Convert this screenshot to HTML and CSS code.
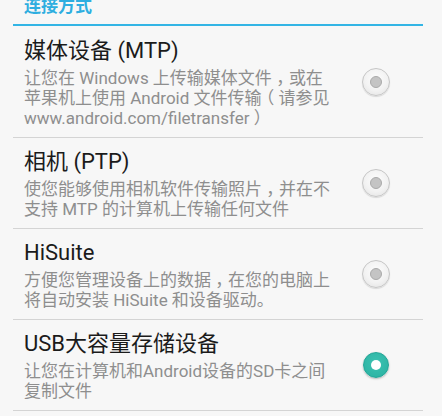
FILE: index.html
```html
<!DOCTYPE html>
<html lang="zh-CN">
<head>
<meta charset="utf-8">
<title>连接方式</title>
<link rel="stylesheet" href="styles.css">
</head>
<body>
<div class="screen">
  <div class="header">连接方式</div>
  <ul class="list">
    <li class="item">
      <div class="text">
        <div class="title">媒体设备 (MTP)</div>
        <div class="desc">
          <div class="line">让您在 Windows 上传输媒体文件<span class="p">，</span>或在</div>
          <div class="line">苹果机上使用 Android 文件传输<span class="p">（</span>请参见</div>
          <div class="line">www.android.com/filetransfer<span class="p">）</span></div>
        </div>
      </div>
      <span class="radio"></span>
    </li>
    <li class="item">
      <div class="text">
        <div class="title">相机 (PTP)</div>
        <div class="desc">
          <div class="line">使您能够使用相机软件传输照片<span class="p">，</span>并在不</div>
          <div class="line">支持 MTP 的计算机上传输任何文件</div>
        </div>
      </div>
      <span class="radio"></span>
    </li>
    <li class="item">
      <div class="text">
        <div class="title">HiSuite</div>
        <div class="desc">
          <div class="line">方便您管理设备上的数据<span class="p">，</span>在您的电脑上</div>
          <div class="line">将自动安装 HiSuite 和设备驱动。</div>
        </div>
      </div>
      <span class="radio"></span>
    </li>
    <li class="item">
      <div class="text">
        <div class="title">USB大容量存储设备</div>
        <div class="desc">
          <div class="line">让您在计算机和Android设备的SD卡之间</div>
          <div class="line">复制文件</div>
        </div>
      </div>
      <span class="radio checked"></span>
    </li>
  </ul>
</div>
</body>
</html>
```

FILE: styles.css
```css
html, body {
  margin: 0;
  padding: 0;
  background: #f7f7f7;
}
body {
  font-family: Roboto, "Noto Sans CJK SC", sans-serif;
  width: 442px;
  height: 416px;
  overflow: hidden;
}
.screen {
  padding: 0 19px 0 13px;
}
.header {
  box-sizing: border-box;
  height: 26px;
  padding-left: 11px;
  font-size: 17px;
  font-weight: bold;
  line-height: 13px;
  color: #2eaee0;
  border-bottom: 2px solid #33b5e5;
}
.list {
  list-style: none;
  margin: 1px 0 0;
  padding: 0;
}
.item {
  display: flex;
  align-items: center;
  padding: 8px 33px 9px 11px;
  border-bottom: 1px solid #d4d4d4;
}
.text {
  flex: 1;
  min-width: 0;
}
.title {
  height: 32px;
  font-size: 22px;
  line-height: 32px;
  color: #1b1b1b;
  white-space: nowrap;
  overflow: visible;
}
.desc {
  margin-top: 1px;
  font-size: 17px;
  line-height: 20px;
  color: #8e8e8e;
}
.line {
  height: 20px;
  white-space: nowrap;
}
.p {
  display: inline-block;
  width: 17px;
  height: 20px;
  text-align: center;
  font-feature-settings: "halt" 1;
  vertical-align: top;
}
.radio {
  box-sizing: border-box;
  flex: none;
  width: 28px;
  height: 28px;
  border-radius: 50%;
  border: 1px solid #c6c6c6;
  background: radial-gradient(circle at 50% 40%, #fdfdfd 0%, #f2f2f2 55%, #e0e0e0 100%);
  box-shadow: 0 1px 1px rgba(0,0,0,0.12);
  display: flex;
  align-items: center;
  justify-content: center;
}
.radio::after {
  content: "";
  box-sizing: border-box;
  width: 12px;
  height: 12px;
  border-radius: 50%;
  background: #c4c4c4;
  border: 1px solid #aaaaaa;
}
.radio.checked {
  width: 26px;
  height: 26px;
  margin: 0 1px;
  border: 1px solid #22a596;
  background: radial-gradient(circle at 50% 40%, #3cc2b2 0%, #2fb6a6 70%, #25a898 100%);
  box-shadow: 0 1px 2px rgba(0,0,0,0.25);
}
.radio.checked::after {
  width: 10px;
  height: 10px;
  background: #ffffff;
  border: none;
}
```
